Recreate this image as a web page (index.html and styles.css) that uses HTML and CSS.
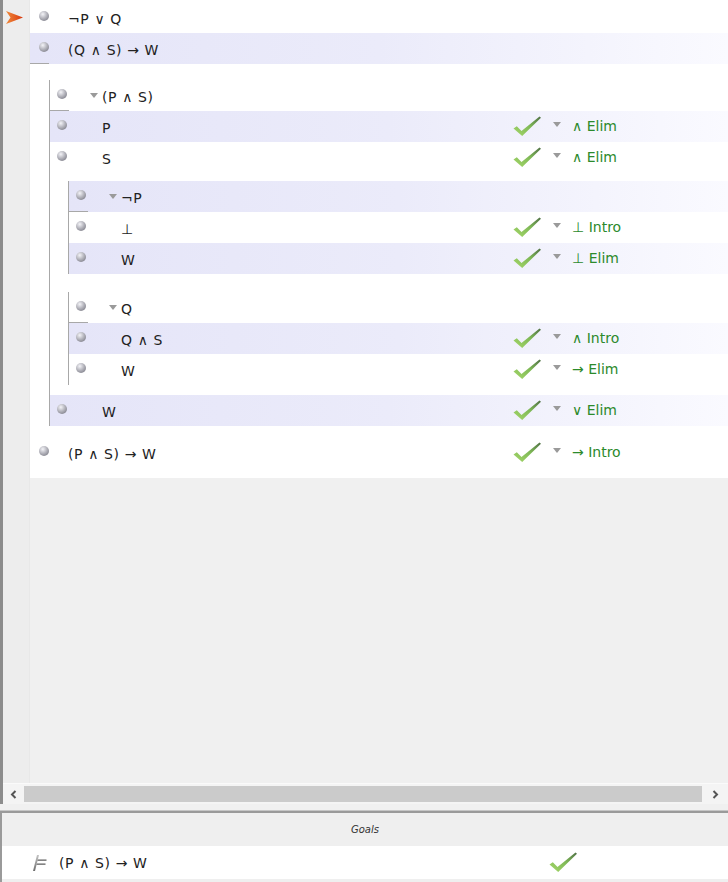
FILE: index.html
```html
<!DOCTYPE html>
<html>
<head>
<meta charset="utf-8">
<link rel="stylesheet" href="styles.css">
</head>
<body>
<svg class="defs" width="0" height="0">
  <defs>
    <linearGradient id="chk" x1="0" y1="1" x2="1" y2="0">
      <stop offset="0" stop-color="#a6d86a"/>
      <stop offset="0.55" stop-color="#7fb956"/>
      <stop offset="1" stop-color="#4f6f45"/>
    </linearGradient>
    <linearGradient id="arw" x1="0" y1="0" x2="1" y2="0">
      <stop offset="0" stop-color="#f08a3a"/>
      <stop offset="1" stop-color="#d9380e"/>
    </linearGradient>
    <linearGradient id="tsg" x1="0" y1="0" x2="0" y2="1">
      <stop offset="0" stop-color="#c4c4c4"/>
      <stop offset="1" stop-color="#6e6e6e"/>
    </linearGradient>
    <symbol id="check" viewBox="0 0 28 20">
      <polygon points="0.5,12.5 3.8,10.2 8.5,15 26.5,0.5 28,1.8 9.2,20" fill="url(#chk)"/>
    </symbol>
  </defs>
</svg>
<div class="app">
  <div class="top">
    <div class="main">
      <div class="gutter">
        <svg class="cursor" width="17" height="13" viewBox="0 0 17 13"><polygon points="0,0 17,6.5 0,13 4.5,6.5" fill="url(#arw)"/></svg>
      </div>
      <div class="canvas">
        <div class="proof">
          <div class="row">
            <span class="bul"></span><span class="f top-f">¬P ∨ Q</span>
          </div>
          <div class="row hl assume">
            <span class="bul"></span><span class="f top-f">(Q ∧ S) → W</span>
          </div>

          <div class="sub s1">
            <div class="row assume">
              <span class="bul"></span><span class="tcell"><i class="tri"></i></span><span class="f">(P ∧ S)</span>
            </div>
            <div class="row hl">
              <span class="bul"></span><span class="tcell"></span><span class="f">P</span>
              <span class="just"><svg class="chk"><use href="#check"/></svg><i class="tri"></i><span class="rule">∧ Elim</span></span>
            </div>
            <div class="row">
              <span class="bul"></span><span class="tcell"></span><span class="f">S</span>
              <span class="just"><svg class="chk"><use href="#check"/></svg><i class="tri"></i><span class="rule">∧ Elim</span></span>
            </div>

            <div class="sub s2">
              <div class="row hl assume">
                <span class="bul"></span><span class="tcell"><i class="tri"></i></span><span class="f">¬P</span>
              </div>
              <div class="row">
                <span class="bul"></span><span class="tcell"></span><span class="f">⊥</span>
                <span class="just"><svg class="chk"><use href="#check"/></svg><i class="tri"></i><span class="rule">⊥ Intro</span></span>
              </div>
              <div class="row hl">
                <span class="bul"></span><span class="tcell"></span><span class="f">W</span>
                <span class="just"><svg class="chk"><use href="#check"/></svg><i class="tri"></i><span class="rule">⊥ Elim</span></span>
              </div>
            </div>

            <div class="sub s3">
              <div class="row assume">
                <span class="bul"></span><span class="tcell"><i class="tri"></i></span><span class="f">Q</span>
              </div>
              <div class="row hl">
                <span class="bul"></span><span class="tcell"></span><span class="f">Q ∧ S</span>
                <span class="just"><svg class="chk"><use href="#check"/></svg><i class="tri"></i><span class="rule">∧ Intro</span></span>
              </div>
              <div class="row">
                <span class="bul"></span><span class="tcell"></span><span class="f">W</span>
                <span class="just"><svg class="chk"><use href="#check"/></svg><i class="tri"></i><span class="rule">→ Elim</span></span>
              </div>
            </div>

            <div class="row hl after-sub">
              <span class="bul"></span><span class="tcell"></span><span class="f">W</span>
              <span class="just"><svg class="chk"><use href="#check"/></svg><i class="tri"></i><span class="rule">∨ Elim</span></span>
            </div>
          </div>

          <div class="row final">
            <span class="bul"></span><span class="f top-f">(P ∧ S) → W</span>
            <span class="just"><svg class="chk"><use href="#check"/></svg><i class="tri"></i><span class="rule">→ Intro</span></span>
          </div>
        </div>
      </div>
    </div>
    <div class="hscroll">
      <span class="sarr left"><svg width="7" height="9" viewBox="0 0 7 9"><polyline points="5.5,1 2,4.5 5.5,8" fill="none" stroke="#555" stroke-width="2"/></svg></span>
      <span class="thumb"></span>
      <span class="sarr right"><svg width="7" height="9" viewBox="0 0 7 9"><polyline points="1.5,1 5,4.5 1.5,8" fill="none" stroke="#555" stroke-width="2"/></svg></span>
    </div>
  </div>
  <div class="goals">
    <div class="ghead">Goals</div>
    <div class="grow">
      <svg class="ticon" width="16" height="17" viewBox="0 0 16 17"><polygon points="1,17 5,1 7,1 3,17" fill="url(#tsg)"/><rect x="5.5" y="5" width="9" height="2" fill="url(#tsg)"/><rect x="4.5" y="9" width="9" height="2" fill="url(#tsg)"/></svg>
      <span class="gf">(P ∧ S) → W</span>
      <svg class="chk gchk"><use href="#check"/></svg>
    </div>
  </div>
</div>
</body>
</html>
```
FILE: styles.css
```css
* { box-sizing: border-box; }
html, body { margin: 0; padding: 0; }
body {
  background: #f0f0f0;
  font-family: "DejaVu Sans", Verdana, sans-serif;
  font-size: 14px;
  color: #222;
  width: 728px;
  height: 882px;
  overflow: hidden;
}
.defs { position: absolute; width: 0; height: 0; }
.app { display: flex; flex-direction: column; height: 882px; }
.top {
  border-left: 3px solid #8c8c8c;
  display: flex;
  flex-direction: column;
}
.main { display: flex; height: 783px; }
.gutter {
  width: 26px;
  flex: none;
  background: #ededed;
  padding: 11px 0 0 3px;
}
.cursor { display: block; }
.canvas { flex: 1; background: #f0f0f0; border-left: 1px solid #e8e8e8; }
.proof {
  background: #fff;
  padding: 2px 0 10px 0;
}
.row {
  display: flex;
  align-items: center;
  height: 31px;
  padding-left: 9px;
}
.row.hl {
  background: linear-gradient(to right, #e5e5f8 0%, #ebebfa 50%, #fafaff 100%);
}
.assume {
  background-image: linear-gradient(#a8a8a8, #a8a8a8);
  background-size: 19px 1px;
  background-position: 0 100%;
  background-repeat: no-repeat;
}
.row.hl.assume {
  background-image: linear-gradient(#a8a8a8, #a8a8a8), linear-gradient(to right, #e5e5f8 0%, #ebebfa 50%, #fafaff 100%);
  background-size: 19px 1px, 100% 100%;
  background-position: 0 100%, 0 0;
  background-repeat: no-repeat, no-repeat;
}
.bul {
  width: 10px;
  height: 10px;
  flex: none;
  border-radius: 50%;
  background: radial-gradient(circle at 38% 32%, #f4f4f8 0%, #b4b4bc 45%, #85858f 80%, #777780 100%);
  margin-top: -3px;
}
.f { padding-top: 2px; white-space: pre; letter-spacing: 0.6px; }
.top-f { margin-left: 19px; }
.tcell {
  width: 35px;
  flex: none;
  display: flex;
  justify-content: flex-end;
  padding-right: 4px;
  padding-top: 0;
}
.tri {
  display: inline-block;
  width: 0;
  height: 0;
  border-left: 4px solid transparent;
  border-right: 4px solid transparent;
  border-top: 5px solid #9a9a9a;
}
.sub { border-left: 1px solid #a8a8a8; }
.sub .row { padding-left: 7px; }
.s1 { margin: 16px 0 0 19px; }
.s2 { margin: 8px 0 0 18px; }
.s3 { margin: 18px 0 0 18px; }
.after-sub { margin-top: 10px; }
.final { margin-top: 11px; }
.just {
  margin-left: auto;
  width: 216px;
  flex: none;
  display: flex;
  align-items: center;
}
.chk { width: 28px; height: 20px; flex: none; display: block; }
.just .chk { margin-left: 1px; margin-top: -2px; }
.just .tri { margin-left: 12px; margin-top: -4px; }
.rule {
  color: #2c8a2c;
  margin-left: 11px;
  padding-top: 0;
  margin-top: -1px;
  font-size: 14px;
}
.hscroll {
  height: 21px;
  display: flex;
  align-items: stretch;
  background: #f4f4f4;
  border-top: 1px solid #fafafa;
}
.sarr { display: flex; align-items: center; justify-content: center; flex: none; }
.sarr.left { width: 21px; }
.sarr.right { width: 26px; }
.thumb { flex: 1; background: #cbcbcb; margin: 2px 0; }
.goals {
  margin-top: 7px;
  border-top: 2px solid #9a9a9a;
  border-left: 2px solid #9a9a9a;
  box-shadow: 0 -1px 0 #c6c6c6;
  flex: 1;
  background: #efefef;
}
.ghead {
  height: 33px;
  display: flex;
  align-items: center;
  justify-content: center;
  font-style: italic;
  font-size: 10px;
  color: #333;
}
.grow {
  height: 33px;
  background: #fff;
  display: flex;
  align-items: center;
  padding-left: 30px;
}
.ticon { display: block; flex: none; }
.gf { margin-left: 11px; padding-top: 0; white-space: pre; letter-spacing: 0.6px; }
.gchk { margin-left: 402px; margin-top: -2px; }
```
